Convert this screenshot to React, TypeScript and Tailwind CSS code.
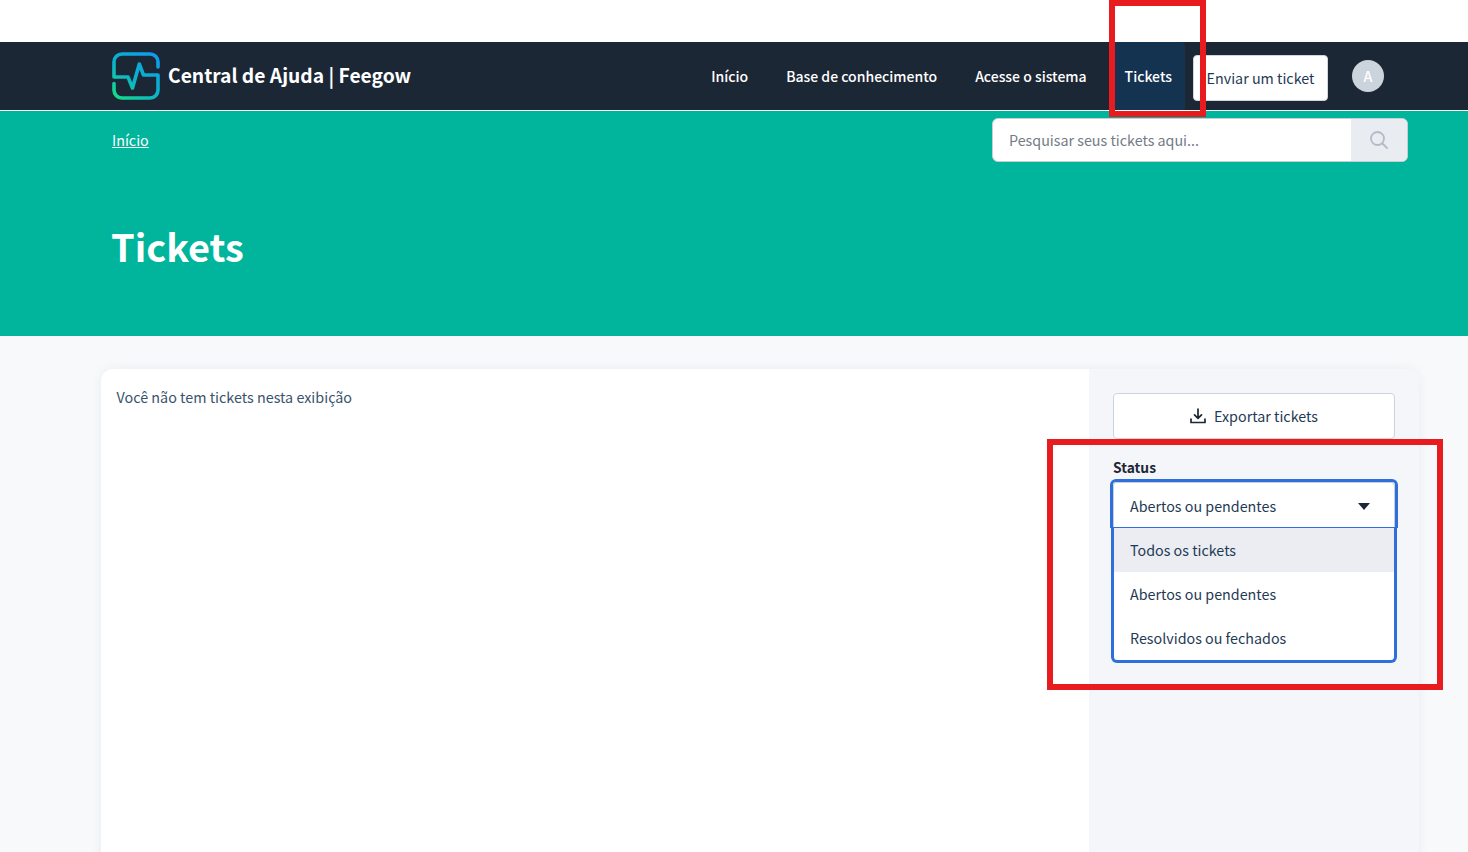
const font = { fontFamily: '"Noto Sans CJK JP", "Noto Sans", sans-serif' }

const navItems = ["Início", "Base de conhecimento", "Acesse o sistema"]
const statusOptions = ["Todos os tickets", "Abertos ou pendentes", "Resolvidos ou fechados"]

function Logo() {
  return (
    <svg width="48" height="48" viewBox="0 0 48 48" fill="none" className="shrink-0">
      <defs>
        <linearGradient id="logoGrad" x1="4" y1="48" x2="40" y2="0" gradientUnits="userSpaceOnUse">
          <stop offset="0" stopColor="#14de85" />
          <stop offset="0.45" stopColor="#0cb4c6" />
          <stop offset="1" stopColor="#0d9bf0" />
        </linearGradient>
      </defs>
      <path
        d="M46 15V10A8 8 0 0 0 38 2H10A8 8 0 0 0 2 10V25H16L20.5 36L27.3 12L31.5 23H46V38A8 8 0 0 1 38 46H10A8 8 0 0 1 2 38V31.5"
        stroke="url(#logoGrad)"
        strokeWidth="3.6"
        strokeLinecap="round"
        strokeLinejoin="round"
      />
    </svg>
  )
}

export default function App() {
  return (
    <div className="relative h-[852px] overflow-hidden bg-[#f8f9fb] text-[#1c2736]" style={font}>
      <div className="h-[42px] bg-white" />

      <header className="h-[69px] bg-[#1c2736] border-b border-white flex items-stretch pl-[112px] pr-[84px]">
        <a className="flex items-center gap-2 text-white text-[19.25px] font-semibold">
          <Logo />
          <span className="mb-[1px]">Central de Ajuda | Feegow</span>
        </a>
        <nav className="ml-auto flex items-stretch text-white text-[14px] font-medium">
          {navItems.map((item) => (
            <a key={item} className="flex items-center px-[19px]">
              {item}
            </a>
          ))}
          <a className="flex items-center px-[13px] ml-[6px] bg-[#133350] rounded-t">Tickets</a>
        </nav>
        <div className="flex items-center ml-2">
          <button className="h-[46px] w-[135px] mt-[4px] bg-white border border-[#d0d6de] rounded text-[#1f3a55] text-[14.3px]">
            Enviar um ticket
          </button>
        </div>
        <div className="flex items-center ml-6">
          <div className="w-8 h-8 rounded-full bg-[#cbd3dc] text-white flex items-center justify-center text-[14.3px] font-medium">
            A
          </div>
        </div>
      </header>

      <section className="h-[225px] bg-[#00b59c] px-[112px] text-white">
        <div className="flex items-start justify-between pt-[7px] mr-[-52px]">
          <a className="underline text-[14.3px] mt-[11px]">Início</a>
          <div className="flex w-[416px] h-[44px] rounded-md border border-[#c8ced6] bg-white overflow-hidden">
            <div className="flex-1 flex items-center px-4 text-[14.3px] text-[#737b86]">Pesquisar seus tickets aqui...</div>
            <div className="w-[56px] bg-[#e9ecf1] flex items-center justify-center">
              <svg width="20" height="20" viewBox="0 0 20 20" fill="none" stroke="#b3bcc6" strokeWidth="1.8" strokeLinecap="round">
                <circle cx="8.5" cy="8.5" r="6.5" />
                <path d="M13.5 13.5L18 18" />
              </svg>
            </div>
          </div>
        </div>
        <h1 className="text-[37.9px] font-bold -ml-[1px] mt-[54px] leading-[60px]">Tickets</h1>
      </section>

      <main className="mt-[33px] ml-[101px] mr-[49px] h-[600px] rounded-xl bg-white shadow-[0_0_12px_rgba(28,39,54,0.06)] flex overflow-hidden">
        <div className="flex-1 pl-[15.5px] py-[16px] text-[14.35px] leading-6 text-[#3a526c]">Você não tem tickets nesta exibição</div>
        <aside className="w-[330px] bg-[#f5f6f9] p-6">
          <button className="w-full h-[46px] bg-white border border-[#cdd3db] rounded flex items-center justify-center gap-2 text-[14.3px] text-[#1f3a55]">
            <svg width="16" height="16" viewBox="0 0 16 16" fill="none" stroke="#1c2736" strokeWidth="1.7" strokeLinecap="round" strokeLinejoin="round">
              <path d="M8 1V10M4.5 6.8L8 10.3L11.5 6.8M1 11V14.5H15V11" />
            </svg>
            Exportar tickets
          </button>
          <div className="mt-[16px] text-[13.8px] font-semibold leading-6">Status</div>
          <div className="relative">
            <div className="h-[49px] -mx-[3px] border-[3px] border-b-[1px] border-[#2f6fdb] rounded-t-md bg-white">
              <div className="h-full pt-[2px] border border-b-0 border-[#c8ced6] rounded-t flex items-center justify-between pl-4 pr-6 text-[14.3px] text-[#1f3a55]">
                <span>Abertos ou pendentes</span>
                <span className="w-0 h-0 border-x-[6px] border-x-transparent border-t-[7px] border-t-[#1c2736]" />
              </div>
            </div>
            <ul className="-mx-[2px] border-[3px] border-t-0 border-[#2f6fdb] rounded-b-md bg-white text-[14.3px] text-[#1f3a55] overflow-hidden">
              {statusOptions.map((option, i) => (
                <li key={option} className={`h-11 flex items-center pl-4 ${i === 0 ? "bg-[#ebedf2]" : ""}`}>
                  {option}
                </li>
              ))}
            </ul>
          </div>
        </aside>
      </main>

      {/* red annotations over the screenshot */}
      <div className="absolute left-[1109px] top-0 w-[97px] h-[117px] border-[6px] border-[#e81c1f]" />
      <div className="absolute left-[1047px] top-[439px] w-[396px] h-[251px] border-[6px] border-[#e81c1f]" />
    </div>
  )
}
